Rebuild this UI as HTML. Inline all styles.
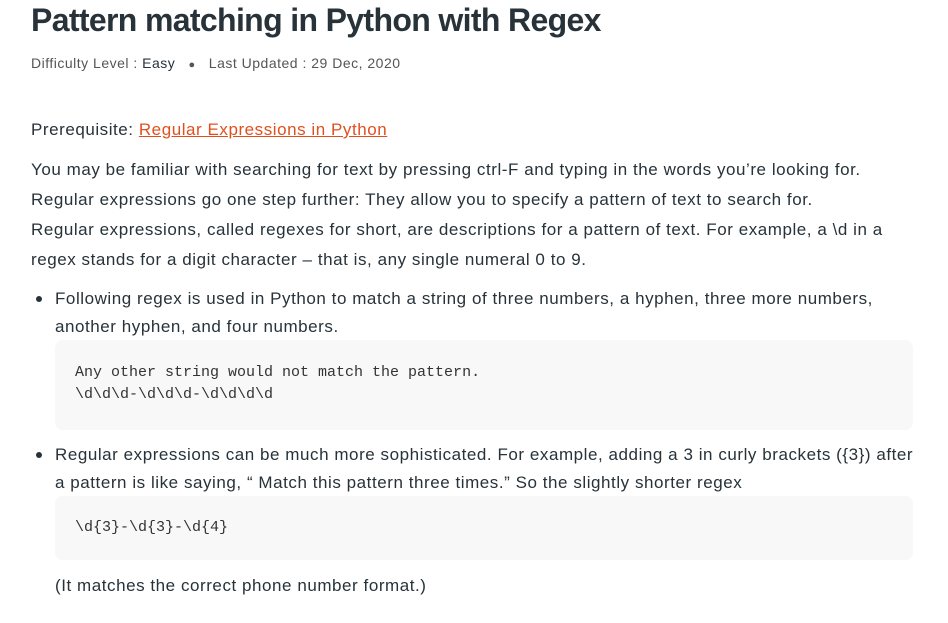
<!DOCTYPE html>
<html><head><meta charset="utf-8"><style>
body{margin:0;background:#fff;color:#273239;font-family:"Liberation Sans",sans-serif;width:948px;height:623px;overflow:hidden;position:relative}
.a{position:absolute;white-space:nowrap}
h1{position:absolute;left:31px;top:0;margin:0;font-size:32px;font-weight:bold;line-height:40px;letter-spacing:-0.65px}
.meta{left:31px;top:55px;font-size:14px;color:#555;letter-spacing:0.5px}
.meta b{font-weight:normal;color:#273239}
.p{font-size:17px;left:31px;line-height:30px;letter-spacing:0.55px}
a{color:#e0501e;text-decoration:underline}
.code{position:absolute;left:55px;width:858px;background:#f8f8f8;border-radius:8px}
.mono{position:absolute;left:75px;font-family:"Liberation Mono",monospace;font-size:15px;line-height:22px;color:#333;white-space:pre}
.dot{position:absolute;width:6px;height:6px;border-radius:3px;background:#273239}
</style></head><body>
<h1>Pattern matching in Python with Regex</h1>
<div class="a meta">Difficulty Level : <b>Easy</b> &nbsp;&nbsp;<span style="font-size:11px">●</span>&nbsp;&nbsp; Last Updated : 29 Dec, 2020</div>
<div class="a p" style="top:115px">Prerequisite: <a>Regular Expressions in Python</a></div>
<div class="a p" style="top:155px">You may be familiar with searching for text by pressing ctrl-F and typing in the words you’re looking for.</div>
<div class="a p" style="top:185px">Regular expressions go one step further: They allow you to specify a pattern of text to search for.</div>
<div class="a p" style="top:215px">Regular expressions, called regexes for short, are descriptions for a pattern of text. For example, a \d in a</div>
<div class="a p" style="top:245px">regex stands for a digit character – that is, any single numeral 0 to 9.</div>
<div class="dot" style="left:36px;top:296px"></div>
<div class="a p" style="top:284px;left:55px">Following regex is used in Python to match a string of three numbers, a hyphen, three more numbers,</div>
<div class="a p" style="top:312px;left:55px">another hyphen, and four numbers.</div>
<div class="code" style="top:340px;height:90px"></div>
<div class="mono" style="top:362px">Any other string would not match the pattern.
\d\d\d-\d\d\d-\d\d\d\d</div>
<div class="dot" style="left:36px;top:452px"></div>
<div class="a p" style="top:440px;left:55px">Regular expressions can be much more sophisticated. For example, adding a 3 in curly brackets ({3}) after</div>
<div class="a p" style="top:468px;left:55px">a pattern is like saying, “ Match this pattern three times.” So the slightly shorter regex</div>
<div class="code" style="top:496px;height:64px"></div>
<div class="mono" style="top:517px">\d{3}-\d{3}-\d{4}</div>
<div class="a p" style="top:571px;left:55px">(It matches the correct phone number format.)</div>
</body></html>
